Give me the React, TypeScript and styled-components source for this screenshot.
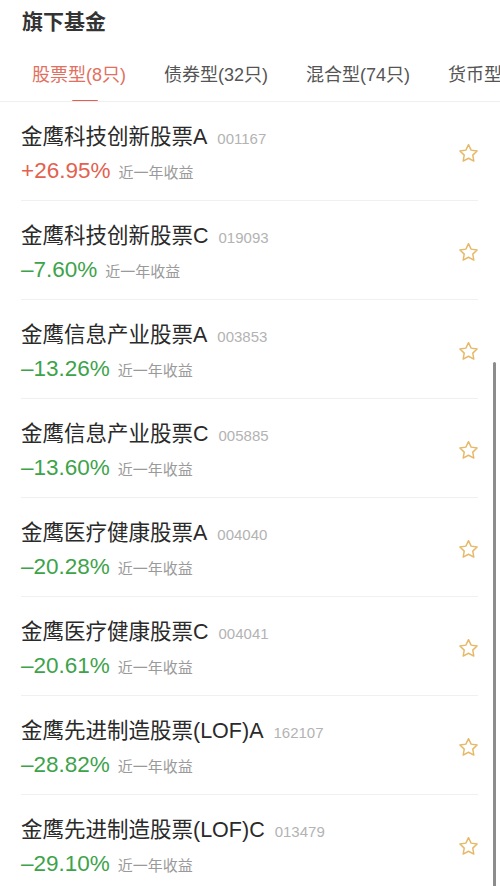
import React from "react";
import styled, { createGlobalStyle } from "styled-components";

const Global = createGlobalStyle`
  html, body { margin: 0; padding: 0; background: #fff; }
  body { font-family: "Liberation Sans", "Noto Sans CJK SC", sans-serif; overflow: hidden; }
`;

const Page = styled.div`
  position: relative;
  width: 500px;
  height: 886px;
  overflow: hidden;
  background: #fff;
`;

const Title = styled.h1`
  margin: 0;
  padding: 8px 0 0 22px;
  height: 36px;
  line-height: 28px;
  font-size: 21px;
  font-weight: 700;
  color: #333;
`;

const Tabs = styled.div`
  display: flex;
  gap: 38px;
  padding-left: 32px;
  height: 57px;
  border-bottom: 1px solid #efefef;
  white-space: nowrap;
  overflow: hidden;
`;

const Tab = styled.div<{ $active?: boolean }>`
  position: relative;
  flex: none;
  font-size: 18px;
  line-height: 26px;
  padding-top: 18px;
  color: ${(p) => (p.$active ? "#e2705f" : "#555")};
  &::after {
    content: "";
    display: ${(p) => (p.$active ? "block" : "none")};
    position: absolute;
    left: 40px;
    bottom: -1px;
    width: 26px;
    height: 2px;
    border-radius: 1px;
    background: #e2604f;
  }
`;

const List = styled.div`
  padding: 0 22px 0 21px;
`;

const Row = styled.div`
  display: flex;
  align-items: flex-start;
  height: 98px;
  border-bottom: 1px solid #f0f0f0;
`;

const Info = styled.div`
  flex: 1;
  display: flex;
  flex-direction: column;
  gap: 4px;
  padding-top: 20px;
`;

const NameLine = styled.div`
  display: flex;
  align-items: baseline;
  gap: 10px;
  height: 30px;
  line-height: 30px;
`;

const Name = styled.span`
  font-size: 21.5px;
  color: #2a2a2a;
`;

const Code = styled.span`
  font-size: 15px;
  color: #b3b3b3;
`;

const RateLine = styled.div`
  display: flex;
  align-items: baseline;
  gap: 8px;
  height: 30px;
  line-height: 30px;
`;

const Rate = styled.span<{ $up: boolean }>`
  font-size: 22.5px;
  color: ${(p) => (p.$up ? "#e4604f" : "#3da34a")};
`;

const RateLabel = styled.span`
  font-size: 15px;
  color: #9a9a9a;
`;

const StarBtn = styled.div`
  align-self: center;
  width: 24px;
  height: 24px;
  margin-right: -2px;
  margin-top: 4px;
  display: flex;
  align-items: center;
  justify-content: center;
`;

const ScrollBar = styled.div`
  position: absolute;
  right: 4px;
  top: 362px;
  width: 3px;
  height: 530px;
  border-radius: 2px;
  background: #8c8c8c;
`;

const Star = () => (
  <svg width="23" height="23" viewBox="0 0 24 24" fill="none">
    <path
      d="M12 2.8l2.75 5.7 6.25.85-4.55 4.35 1.1 6.2L12 16.95 6.45 19.9l1.1-6.2L3 9.35l6.25-.85z"
      stroke="#e6b867"
      strokeWidth="1.5"
      strokeLinejoin="round"
    />
  </svg>
);

const funds = [
  { name: "金鹰科技创新股票A", code: "001167", rate: "+26.95%", up: true },
  { name: "金鹰科技创新股票C", code: "019093", rate: "–7.60%", up: false },
  { name: "金鹰信息产业股票A", code: "003853", rate: "–13.26%", up: false },
  { name: "金鹰信息产业股票C", code: "005885", rate: "–13.60%", up: false },
  { name: "金鹰医疗健康股票A", code: "004040", rate: "–20.28%", up: false },
  { name: "金鹰医疗健康股票C", code: "004041", rate: "–20.61%", up: false },
  { name: "金鹰先进制造股票(LOF)A", code: "162107", rate: "–28.82%", up: false },
  { name: "金鹰先进制造股票(LOF)C", code: "013479", rate: "–29.10%", up: false },
];

const tabs = ["股票型(8只)", "债券型(32只)", "混合型(74只)", "货币型"];

export default function App() {
  return (
    <Page>
      <Global />
      <Title>旗下基金</Title>
      <Tabs>
        {tabs.map((t, i) => (
          <Tab key={t} $active={i === 0}>
            {t}
          </Tab>
        ))}
      </Tabs>
      <List>
        {funds.map((f) => (
          <Row key={f.code}>
            <Info>
              <NameLine>
                <Name>{f.name}</Name>
                <Code>{f.code}</Code>
              </NameLine>
              <RateLine>
                <Rate $up={f.up}>{f.rate}</Rate>
                <RateLabel>近一年收益</RateLabel>
              </RateLine>
            </Info>
            <StarBtn>
              <Star />
            </StarBtn>
          </Row>
        ))}
      </List>
      <ScrollBar />
    </Page>
  );
}
